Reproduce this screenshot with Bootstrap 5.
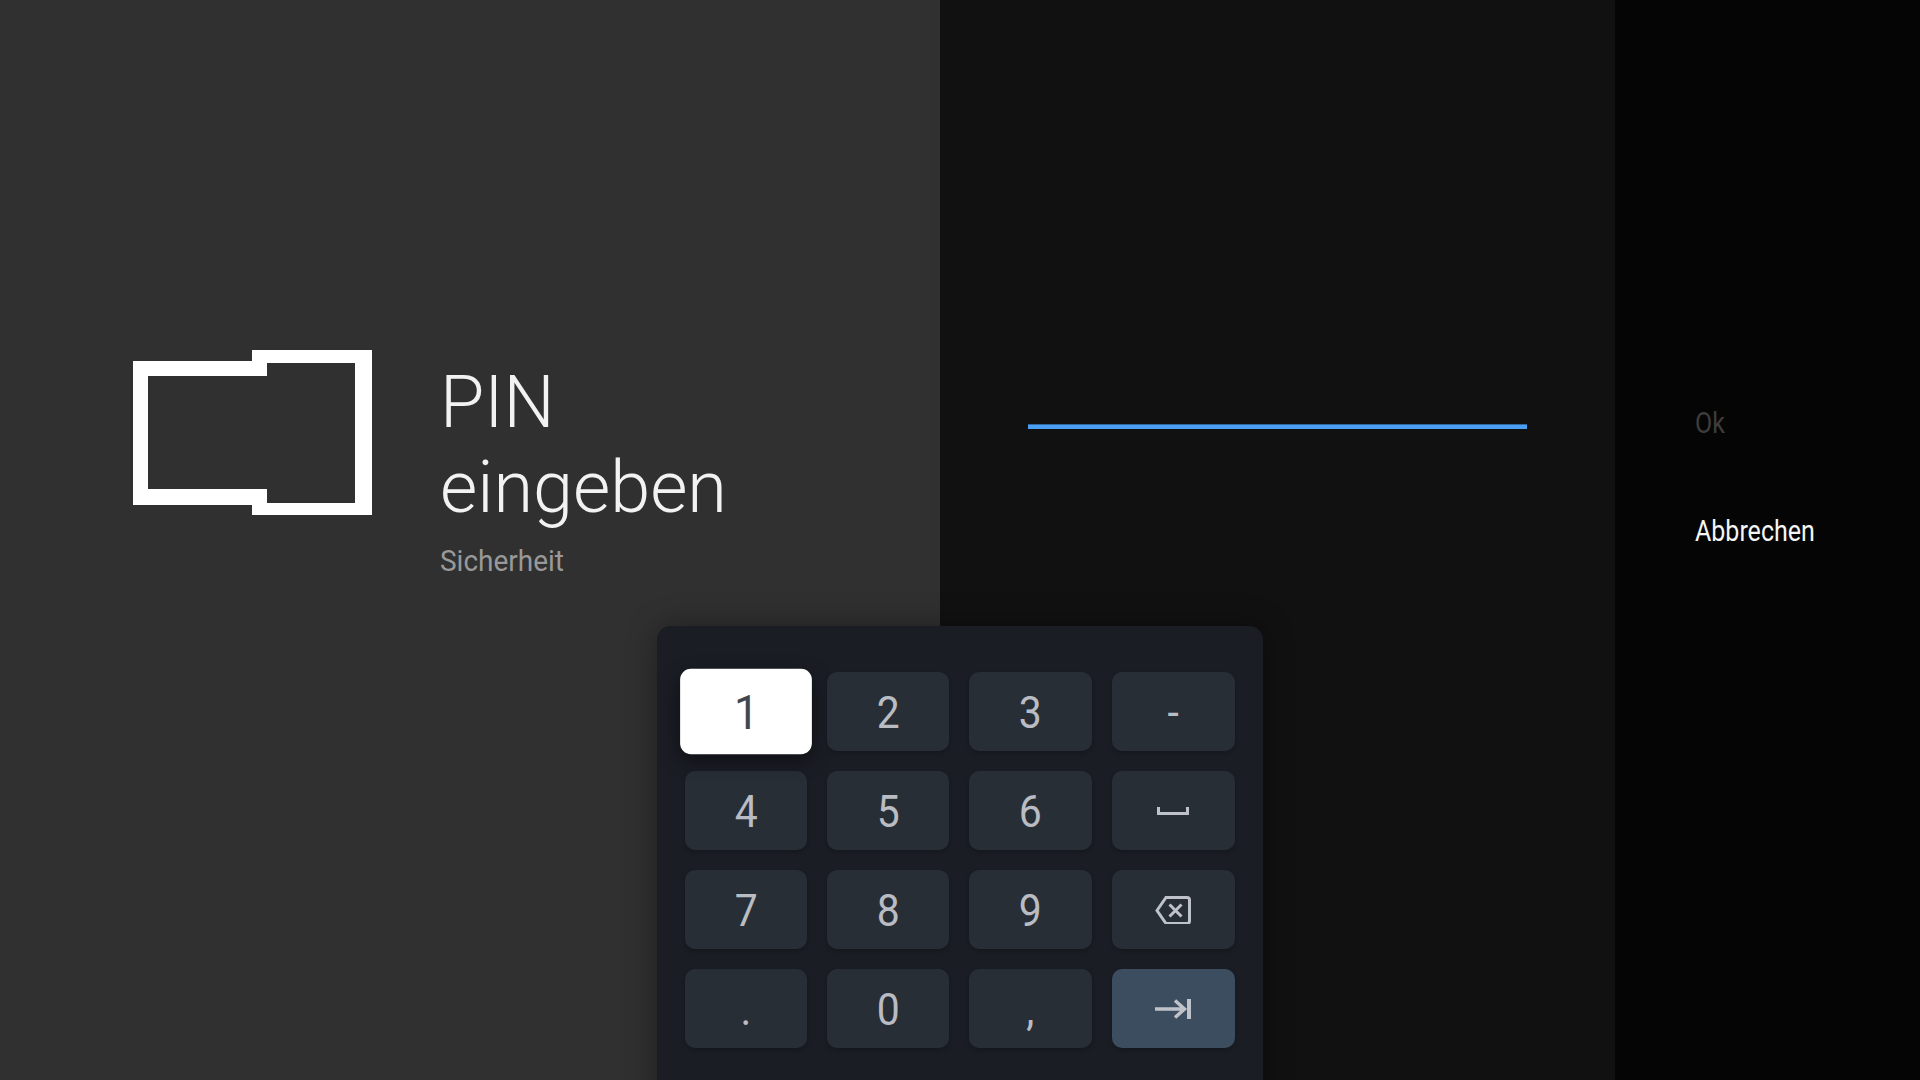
<!DOCTYPE html>
<html lang="de">
  <head>
    <meta charset="UTF-8" />
    <meta name="viewport" content="width=device-width, initial-scale=1.0" />
    <title>PIN eingeben</title>
    <link
      href="https://cdn.jsdelivr.net/npm/bootstrap@5.3.0/dist/css/bootstrap.min.css"
      rel="stylesheet"
    />
    <style>
      body {
        width: 1920px;
        height: 1080px;
        overflow: hidden;
        background-color: #050505;
        font-family: Roboto, "Liberation Sans", sans-serif;
      }
      .tv-screen {
        height: 1080px;
      }
      .guide-pane {
        width: 940px;
        background-color: #303030;
        padding: 350px 0 0 133px;
      }
      .guide-logo {
        width: 239px;
        height: 165px;
        flex: none;
      }
      .guide-text {
        margin-left: 68px;
        margin-top: 10px;
      }
      .guide-title {
        font-size: 72px;
        font-weight: 300;
        line-height: 85px;
        color: #f2f2f2;
      }
      .guide-sub {
        font-size: 29px;
        line-height: 36px;
        color: #999;
        margin-top: 13px;
        transform: scaleX(0.965);
        transform-origin: left;
      }
      .input-pane {
        width: 675px;
        background-color: #111;
        padding: 424px 0 0 88px;
      }
      .pin-line {
        width: 499px;
        height: 5px;
        background-color: #4a9ff5;
        border-top: 1px solid #2f689f;
      }
      .action-pane {
        width: 305px;
        background-color: #050505;
        padding: 405px 0 0 80px;
      }
      .action-item {
        font-size: 29px;
        line-height: 36px;
        height: 108px;
        color: #f5f5f5;
        transform: scaleX(0.862);
        transform-origin: left;
      }
      .action-off {
        color: #3d3d3d;
      }
      .keypad {
        position: absolute;
        left: 657px;
        top: 626px;
        width: 606px;
        height: 500px;
        padding: 46px 28px;
        background-color: #1a1d24;
        border-radius: 14px;
        box-shadow: 0 0 30px rgba(0, 0, 0, 0.35);
        grid-template-columns: 122px 122px 123px 123px;
        grid-auto-rows: 79px;
        gap: 20px;
        align-content: start;
      }
      .pad-key {
        background-color: #282e36;
        border-radius: 10px;
        color: #b9bcc2;
        font-size: 44px;
        line-height: 1;
        box-shadow: 0 2px 4px rgba(0, 0, 0, 0.2);
      }
      .pad-glyph {
        display: inline-block;
        padding-top: 2px;
        transform: scaleX(0.93);
      }
      .pad-key.pad-focus {
        background-color: #fff;
        color: #43474d;
        transform: scale(1.08);
        box-shadow: 0 6px 18px rgba(0, 0, 0, 0.45);
      }
      .pad-key.pad-enter {
        background-color: #3c4d60;
      }
      .pad-key svg {
        margin-left: -2px;
        fill: none;
        stroke: #bfc2c8;
        stroke-width: 3;
      }
    </style>
  </head>
  <body>
    <div class="tv-screen d-flex position-relative">
      <!-- Left: title -->
      <div class="guide-pane d-flex align-items-start">
        <svg class="guide-logo" viewBox="0 0 239 165">
          <path
            fill="#fff"
            fill-rule="evenodd"
            d="M119 0H239V165H119V155H0V11H119ZM15 26V139H134V153H222V13H134V26Z"
          />
        </svg>
        <div class="guide-text">
          <div class="guide-title">PIN<br />eingeben</div>
          <div class="guide-sub">Sicherheit</div>
        </div>
      </div>

      <!-- Middle: pin entry -->
      <div class="input-pane">
        <div class="pin-line"></div>
      </div>

      <!-- Right: actions -->
      <div class="action-pane">
        <div class="action-item action-off">Ok</div>
        <div class="action-item">Abbrechen</div>
      </div>

      <!-- Keypad -->
      <div class="keypad d-grid" id="keypad"></div>
    </div>

    <script>
      const icons = {
        space:
          '<svg width="32" height="8" viewBox="0 0 32 8"><path d="M1.5 0V6.5H30.5V0"/></svg>',
        back:
          '<svg width="36" height="29" viewBox="0 -1 36 29"><path d="M2 14.5L11 1.5H32Q34.5 1.5 34.5 4V25Q34.5 27.5 32 27.5H11Z"/><path d="M14.5 8.5L26.5 20.5M26.5 8.5L14.5 20.5"/></svg>',
        enter:
          '<svg width="36" height="20" viewBox="0 0 36 20"><path stroke-width="3.5" d="M0 10H29M20 1.5L29.5 10L20 18.5"/><path stroke-width="4" d="M34 0V20"/></svg>',
      };
      const keys = [
        "1", "2", "3", "-",
        "4", "5", "6", icons.space,
        "7", "8", "9", icons.back,
        ".", "0", ",", icons.enter,
      ];

      const keypad = document.getElementById("keypad");
      keys.forEach((key, i) => {
        let extra = "";
        if (i === 0) extra = " pad-focus";
        if (key === icons.enter) extra = " pad-enter";
        const label = key.startsWith("<svg") ? key : `<span class="pad-glyph">${key}</span>`;
        keypad.innerHTML += `<div class="pad-key d-flex align-items-center justify-content-center${extra}">${label}</div>`;
      });
    </script>

    <script src="https://cdn.jsdelivr.net/npm/bootstrap@5.3.0/dist/js/bootstrap.bundle.min.js"></script>
  </body>
</html>
